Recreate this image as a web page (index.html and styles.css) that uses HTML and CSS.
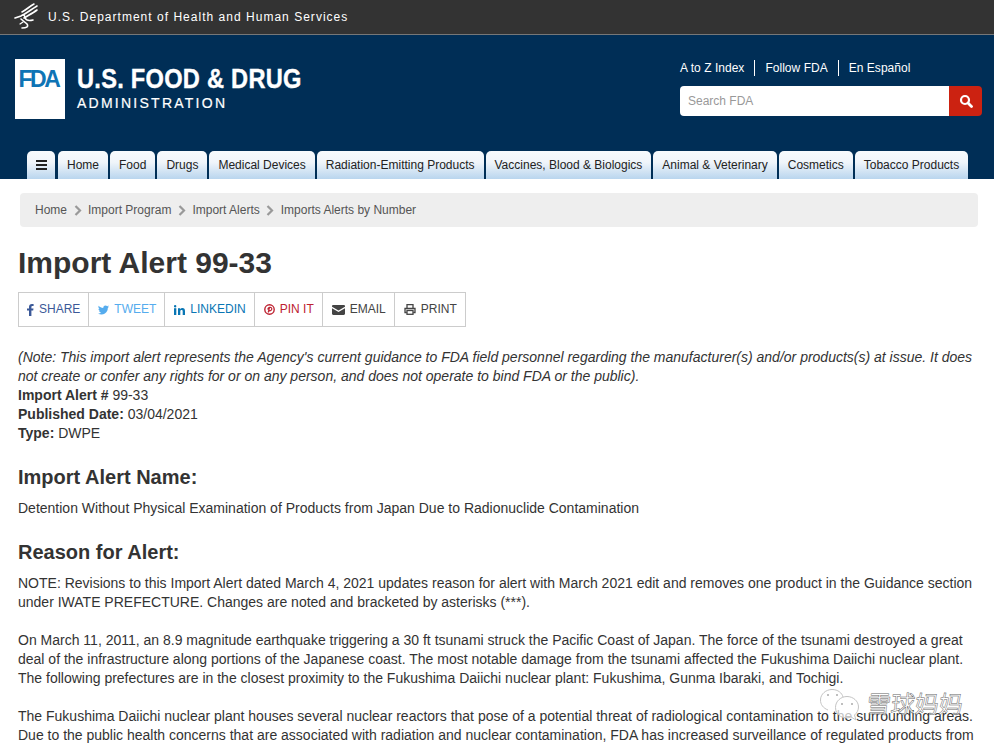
FILE: index.html
```html
<!DOCTYPE html>
<html lang="en">
<head>
  <meta charset="UTF-8" />
  <meta name="viewport" content="width=device-width, initial-scale=1.0"/>
  <title>Import Alert 99-33</title>
  <link rel="stylesheet" href="styles.css">
</head>
<body>

<div class="hhs-bar">
  <svg class="hhs-logo" width="26" height="28" viewBox="0 0 26 28" fill="none" stroke="#fff" stroke-linecap="round">
    <path d="M8 9 C12 7 16 3 20 1" stroke-width="1.600"/>
    <path d="M9 12 C14 9 18 6 23 3" stroke-width="1.600"/>
    <path d="M10 15 C15 12 19 10 23 7" stroke-width="1.600"/>
    <path d="M1 15 L7 13 C9 11 11 12 11 15 C12 17 15 18 19 17" stroke-width="1.600"/>
    <path d="M7 16 L13 21 C15 24 12 25 8 25" stroke-width="1.600"/>
    <path d="M9 19 L6 21" stroke-width="1.200"/>
  </svg>
  <span>U.S. Department of Health and Human Services</span>
</div>

<header class="site-header">
  <div class="header-top">
    <a class="brand">
      <span class="fda-box">FDA</span>
      <span class="brand-text">
        <span class="brand-main">U.S. FOOD &amp; DRUG</span>
        <span class="brand-sub">ADMINISTRATION</span>
      </span>
    </a>
    <div class="header-right">
      <div class="util-links">
        <a>A to Z Index</a>
        <a>Follow FDA</a>
        <a>En Español</a>
      </div>
      <div class="search">
        <div class="search-input">Search FDA</div>
        <div class="search-btn">
          <svg width="14" height="14" viewBox="0 0 14 14" fill="none" stroke="#fff">
            <circle cx="6" cy="6" r="4" stroke-width="2.200"/>
            <path d="M9 9 L12.500 12.500" stroke-width="2.800" stroke-linecap="round"/>
          </svg>
        </div>
      </div>
    </div>
  </div>
  <nav class="tabs">
    <a class="tab tab-menu">
      <svg width="11" height="10" viewBox="0 0 11 10" fill="#222"><rect width="11" height="2"/><rect y="4" width="11" height="2"/><rect y="8" width="11" height="2"/></svg>
    </a>
    <a class="tab">Home</a>
    <a class="tab">Food</a>
    <a class="tab">Drugs</a>
    <a class="tab">Medical Devices</a>
    <a class="tab">Radiation-Emitting Products</a>
    <a class="tab">Vaccines, Blood &amp; Biologics</a>
    <a class="tab">Animal &amp; Veterinary</a>
    <a class="tab">Cosmetics</a>
    <a class="tab">Tobacco Products</a>
  </nav>
</header>

<div class="breadcrumb">
  <a>Home</a>
  <svg class="crumb-sep" width="8" height="11" viewBox="0 0 8 11" fill="none" stroke="#999" stroke-width="2.200"><path d="M1.500 1 L6 5.500 L1.500 10"/></svg>
  <a>Import Program</a>
  <svg class="crumb-sep" width="8" height="11" viewBox="0 0 8 11" fill="none" stroke="#999" stroke-width="2.200"><path d="M1.500 1 L6 5.500 L1.500 10"/></svg>
  <a>Import Alerts</a>
  <svg class="crumb-sep" width="8" height="11" viewBox="0 0 8 11" fill="none" stroke="#999" stroke-width="2.200"><path d="M1.500 1 L6 5.500 L1.500 10"/></svg>
  <a>Imports Alerts by Number</a>
</div>

<main class="content">
  <h1>Import Alert 99-33</h1>

  <div class="share">
    <a class="share-item c-fb">
      <svg width="7" height="12" viewBox="0 0 7 12" fill="currentColor"><path d="M2 12V6.600H0V4.500h2V3C2 1 3.100 0 4.900 0H6.600V2H5.500C4.700 2 4.400 2.400 4.400 3.100V4.500H6.500L6.200 6.600H4.400V12Z"/></svg>
      SHARE</a>
    <a class="share-item c-tw">
      <svg width="11" height="10" viewBox="0 0 12 10" fill="currentColor"><path d="M12 1.200C11.500 1.400 11 1.600 10.600 1.600C11.100 1.300 11.500 .8 11.700 .2C11.200 .5 10.700 .7 10.100 .8C9 -.4 6.900 -.2 6.100 1.100C5.800 1.600 5.700 2.300 5.800 2.900C3.700 2.800 1.900 1.800 .8 .4C.1 1.600 .5 3.100 1.600 3.900C1.200 3.900 .8 3.800 .5 3.600C.5 4.800 1.300 5.800 2.400 6.100C2.100 6.200 1.700 6.200 1.300 6.100C1.600 7.100 2.500 7.800 3.600 7.800C2.600 8.600 1.300 9 0 8.800C3.500 11 8.500 9.800 10.100 5.800C10.500 4.800 10.700 3.800 10.700 2.700C11.200 2.300 11.700 1.800 12 1.200Z"/></svg>
      TWEET</a>
    <a class="share-item c-in">
      <svg width="11" height="10" viewBox="0 0 11 10" fill="currentColor"><rect x="0" y="3.200" width="2.300" height="6.800"/><circle cx="1.150" cy="1.200" r="1.200"/><path d="M4 3.200H6.200V4.200C6.700 3.400 7.500 3 8.400 3C10.200 3 11 4.200 11 6V10H8.700V6.400C8.700 5.500 8.300 5 7.500 5C6.700 5 6.300 5.600 6.300 6.400V10H4Z"/></svg>
      LINKEDIN</a>
    <a class="share-item c-pin">
      <svg width="11" height="11" viewBox="0 0 11 11"><circle cx="5.500" cy="5.500" r="4.700" fill="none" stroke="currentColor" stroke-width="1.400"/><path d="M4.200 8.500 L5.400 3.800 M4 5.500C3.300 3.500 7.500 2.200 7.800 4.600C8 6.500 5.800 7.400 5 6.200" fill="none" stroke="currentColor" stroke-width="1.200"/></svg>
      PIN IT</a>
    <a class="share-item c-mail">
      <svg width="13" height="10" viewBox="0 0 12 10" preserveAspectRatio="none" fill="currentColor"><path d="M0 1.200C0 .5 .5 0 1.200 0H10.800C11.500 0 12 .5 12 1.200V1.800L6 5.500L0 1.800Z"/><path d="M0 3.300L6 7L12 3.300V8.800C12 9.500 11.500 10 10.800 10H1.200C.5 10 0 9.500 0 8.800Z"/></svg>
      EMAIL</a>
    <a class="share-item c-print">
      <svg width="12" height="11" viewBox="0 0 12 11" fill="none" stroke="currentColor" stroke-width="1.300"><path d="M3 4V.7H9V4"/><path d="M2.800 8.500H1V4.500H11V8.500H9.200"/><rect x="3" y="6.500" width="6" height="3.800"/></svg>
      PRINT</a>
  </div>

  <p class="meta"><em>(Note: This import alert represents the Agency's current guidance to FDA field personnel regarding the manufacturer(s) and/or products(s) at issue. It does not create or confer any rights for or on any person, and does not operate to bind FDA or the public).</em><br>
  <strong>Import Alert #</strong> 99-33<br>
  <strong>Published Date:</strong> 03/04/2021<br>
  <strong>Type:</strong> DWPE</p>

  <h2>Import Alert Name:</h2>
  <p class="alert-name">Detention Without Physical Examination of Products from Japan Due to Radionuclide Contamination</p>

  <h2>Reason for Alert:</h2>
  <p class="para">NOTE: Revisions to this Import Alert dated March 4, 2021 updates reason for alert with March 2021 edit and removes one product in the Guidance section under IWATE PREFECTURE. Changes are noted and bracketed by asterisks (***).</p>
  <p class="para">On March 11, 2011, an 8.9 magnitude earthquake triggering a 30 ft tsunami struck the Pacific Coast of Japan. The force of the tsunami destroyed a great deal of the infrastructure along portions of the Japanese coast. The most notable damage from the tsunami affected the Fukushima Daiichi nuclear plant. The following prefectures are in the closest proximity to the Fukushima Daiichi nuclear plant: Fukushima, Gunma Ibaraki, and Tochigi.</p>
  <p class="para">The Fukushima Daiichi nuclear plant houses several nuclear reactors that pose of a potential threat of radiological contamination to the surrounding areas. Due to the public health concerns that are associated with radiation and nuclear contamination, FDA has increased surveillance of regulated products from</p>
</main>

<div class="watermark">
  <svg width="42" height="34" viewBox="0 0 42 34" stroke="#c4c4c4" stroke-width="1">
    <path d="M8 21C3 19 .5 15.500 .5 11C.5 5 6 .5 12 .5C18 .5 22 4 23 8" fill="rgba(255,255,255,.25)"/>
    <path d="M27 7.500C33 7.500 38.500 12 38.500 18C38.500 21 37 24 34.500 26L36 31L31 28C23 31 15.500 26 15.500 18.500C15.500 12 21 7.500 27 7.500Z" fill="rgba(255,255,255,.7)"/>
    <circle cx="8" cy="6" r="1" fill="#aaa" stroke="none"/><circle cx="17" cy="6" r="1" fill="#aaa" stroke="none"/>
    <circle cx="22" cy="15" r="1" fill="#aaa" stroke="none"/><circle cx="32" cy="15" r="1" fill="#aaa" stroke="none"/>
  </svg>
  <span>雪球妈妈</span>
</div>

</body>
</html>
```

FILE: styles.css
```css
html, body {
  height: 748px;
  overflow: hidden;
}
body {
  font-family: 'Liberation Sans', Arial, sans-serif;
  background: #fff;
  color: #333;
  margin: 0;
  font-size: 14px;
  line-height: 19px;
  position: relative;
}
.hhs-bar {
  height: 34px;
  background: #333;
  border-bottom: 1px solid #777;
  color: #fff;
  display: flex;
  align-items: center;
  padding-left: 14px;
  gap: 8px;
  font-size: 12px;
  letter-spacing: 1.02px;
}
.site-header {
  background: #002e56;
  height: 144px;
  display: flex;
  flex-direction: column;
  justify-content: space-between;
}
.header-top {
  display: flex;
  justify-content: space-between;
  padding: 24px 12px 0 15px;
}
.brand {
  display: flex;
  color: #fff;
}
.fda-box {
  width: 50px;
  height: 60px;
  background: #fff;
  color: #0f74b5;
  font-weight: bold;
  font-size: 23px;
  line-height: 24px;
  letter-spacing: -2.4px;
  display: flex;
  justify-content: center;
  padding: 8px 3px 0 0;
  box-sizing: border-box;
}
.brand-text {
  display: flex;
  flex-direction: column;
  margin-left: 12px;
}
.brand-main {
  font-weight: bold;
  font-size: 27px;
  line-height: 30px;
  margin-top: 5px;
  letter-spacing: 0.3px;
  white-space: nowrap;
  transform: scaleX(0.875);
  transform-origin: left;
  -webkit-text-stroke: 0.4px #fff;
}
.brand-sub {
  font-size: 14px;
  line-height: 18px;
  letter-spacing: 2.25px;
  -webkit-text-stroke: 0.2px #fff;
}
.header-right {
  width: 302px;
}
.util-links {
  display: flex;
  color: #fff;
  font-size: 12px;
  letter-spacing: 0.03px;
  line-height: 16px;
  margin-top: 1px;
}
.util-links a {
  padding: 0 10px;
  border-left: 1px solid #fff;
}
.util-links a:first-child {
  padding-left: 0;
  border-left: none;
}
.search {
  display: flex;
  height: 30px;
  margin-top: 10px;
}
.search-input {
  flex: 1;
  background: #fff;
  color: #999;
  font-size: 12px;
  line-height: 30px;
  padding-left: 8px;
  border-radius: 4px 0 0 4px;
}
.search-btn {
  width: 33px;
  background: #cc2211;
  border-radius: 0 4px 4px 0;
  display: flex;
  align-items: center;
  justify-content: center;
}
.tabs {
  display: flex;
  gap: 2px;
  padding-left: 27px;
}
.tab {
  height: 28px;
  padding: 0 9px;
  background: linear-gradient(#f7fafd, #f0f5fa 40%, #b9d5ee);
  border-radius: 5px 5px 0 0;
  color: #222;
  font-size: 12px;
  line-height: 28px;
  white-space: nowrap;
}
.tab-menu {
  padding: 0 8.5px;
  margin-right: 1px;
  display: flex;
  align-items: center;
}
.breadcrumb {
  margin: 14px 16px 0 20px;
  height: 34px;
  background: #eee;
  border-radius: 4px;
  display: flex;
  align-items: center;
  gap: 6.5px;
  padding-left: 15px;
  font-size: 12px;
  color: #555;
}
.content {
  padding: 0 18px;
}
h1 {
  font-size: 30px;
  line-height: 34px;
  margin: 19px 0 12px;
}
.share {
  display: inline-flex;
  height: 33px;
  border: 1px solid #ccc;
  vertical-align: top;
}
.share-item {
  display: flex;
  align-items: center;
  gap: 5px;
  padding: 0 8px 0 9px;
  border-left: 1px solid #ccc;
  font-size: 12px;
}
.share-item:first-child {
  border-left: none;
  padding-left: 8px;
}
.c-fb { color: #3b5998; }
.c-tw { color: #55acee; }
.c-in { color: #0976b4; }
.c-pin { color: #bd2130; }
.c-mail, .c-print { color: #444; }
p {
  margin: 0;
}
.meta {
  margin-top: 21px;
}
h2 {
  font-size: 20px;
  line-height: 24px;
  margin: 22px 0 10px;
}
.alert-name {
  margin-bottom: 1px;
}
.para {
  margin-bottom: 19px;
}
.watermark {
  position: absolute;
  left: 820px;
  top: 689px;
  display: flex;
  align-items: flex-start;
  gap: 5px;
}
.watermark span {
  font-family: 'Noto Sans CJK SC', sans-serif;
  font-size: 24px;
  line-height: 28px;
  color: rgba(255, 255, 255, 0.7);
  -webkit-text-stroke: 0.5px #666;
  transform: skewX(-6deg);
}
```
